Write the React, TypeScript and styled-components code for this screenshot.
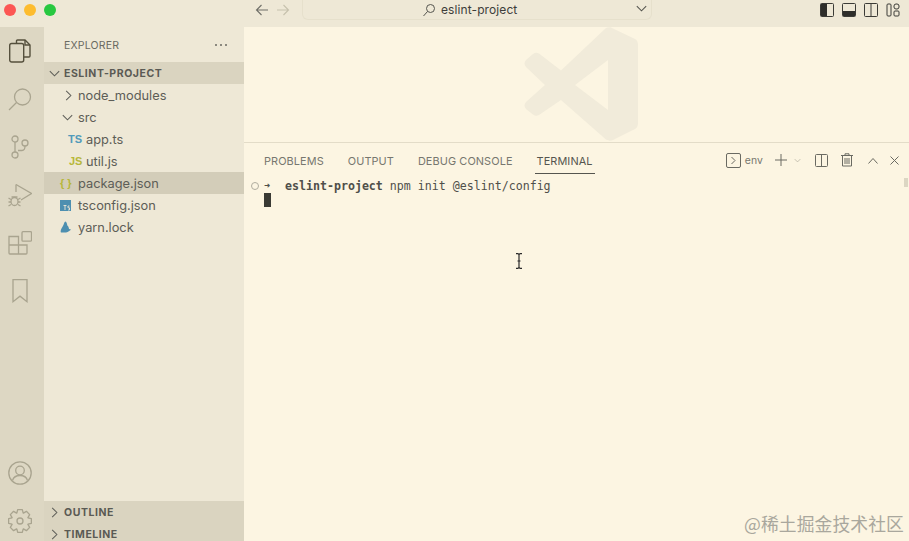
import React from "react";
import styled, { createGlobalStyle } from "styled-components";

const Global = createGlobalStyle`
  html, body {
    margin: 0;
    padding: 0;
    width: 909px;
    height: 541px;
    overflow: hidden;
    background: #fdf6e3;
    font-family: "Inter", "Liberation Sans", sans-serif;
  }
`;

const Window = styled.div`
  position: relative;
  width: 909px;
  height: 541px;
  overflow: hidden;
  display: flex;
  flex-direction: column;
  background: #fcf5e2;
`;

const TitleBar = styled.div`
  height: 27px;
  flex: none;
  display: flex;
  align-items: flex-start;
  background: #eee8d6;
`;

const Lights = styled.div`
  width: 244px;
  flex: none;
  display: flex;
  gap: 8px;
  padding: 4px 0 0 4px;
  box-sizing: border-box;
`;

const Light = styled.span<{ $color: string }>`
  width: 12px;
  height: 12px;
  border-radius: 50%;
  background: ${(p) => p.$color};
`;

const NavArrows = styled.div`
  display: flex;
  gap: 7px;
  padding: 3px 0 0 11px;
  width: 58px;
  box-sizing: border-box;
`;

const SearchBox = styled.div`
  width: 350px;
  height: 20px;
  flex: none;
  box-sizing: border-box;
  border: 1px solid #e6e0cc;
  border-top: none;
  border-radius: 0 0 6px 6px;
  display: flex;
  align-items: center;
  padding-left: 119px;
  color: #3d3d3a;
  font-size: 12px;
  letter-spacing: 0.1px;
  position: relative;
`;

const SearchLabel = styled.span`
  margin-left: 5px;
`;

const SearchChevron = styled.span`
  position: absolute;
  right: 2px;
  top: 1px;
  display: flex;
`;

const LayoutIcons = styled.div`
  margin-left: auto;
  display: flex;
  gap: 8px;
  padding: 3px 9px 0 0;
`;

const Body = styled.div`
  height: 518px;
  flex: none;
  display: flex;
  min-height: 0;
`;

const ActivityBar = styled.div`
  width: 44px;
  flex: none;
  background: #ddd7c3;
  display: flex;
  flex-direction: column;
  align-items: center;
  gap: 24px;
  padding: 12px 4px 12px 0;
  box-sizing: border-box;
  color: #a9a48f;
`;

const ActivityIcon = styled.div`
  height: 24px;
  display: flex;
  align-items: center;
  justify-content: center;
`;

const Spacer = styled.div`
  flex: 1;
`;

const SideBar = styled.div`
  width: 200px;
  flex: none;
  background: #eee8d6;
  display: flex;
  flex-direction: column;
  color: #5f5f59;
`;

const SideHeader = styled.div`
  height: 35px;
  flex: none;
  display: flex;
  align-items: center;
  justify-content: space-between;
  padding: 1px 17px 0 20px;
  box-sizing: border-box;
  font-size: 10.5px;
  letter-spacing: 0.2px;
  color: #6a6a62;
`;

const Dots = styled.span`
  display: flex;
  gap: 3px;
`;

const Dot = styled.i`
  width: 2px;
  height: 2px;
  border-radius: 50%;
  background: #6a6a62;
`;

const SectionRow = styled.div`
  height: 22px;
  flex: none;
  display: flex;
  align-items: center;
  background: #dad4c0;
  font-size: 10.5px;
  font-weight: 700;
  letter-spacing: 0.55px;
  color: #5a5a54;
  padding-left: 3px;
  gap: 2px;
`;

const Tree = styled.div`
  flex: 1;
  display: flex;
  flex-direction: column;
`;

const TreeRow = styled.div<{ $indent: number; $selected?: boolean }>`
  height: 22px;
  flex: none;
  display: flex;
  align-items: center;
  padding-left: ${(p) => p.$indent}px;
  font-size: 12.8px;
  color: #5d5d57;
  background: ${(p) => (p.$selected ? "#d3cdb9" : "transparent")};
`;

const IconSlot = styled.span<{ $width: number }>`
  width: ${(p) => p.$width}px;
  flex: none;
  display: flex;
  align-items: center;
`;

const BadgeText = styled.span<{ $color: string }>`
  font-size: 11px;
  font-weight: 700;
  color: ${(p) => p.$color};
  font-family: "Liberation Sans", sans-serif;
`;

const Main = styled.div`
  flex: 1;
  min-width: 0;
  display: flex;
  flex-direction: column;
`;

const Editor = styled.div`
  height: 115px;
  flex: none;
  overflow: hidden;
  display: flex;
  justify-content: center;
  align-items: flex-start;
`;

const Watermark = styled.svg`
  margin-left: 8px;
`;

const Panel = styled.div`
  flex: 1;
  border-top: 1px solid #e3dcc8;
  display: flex;
  flex-direction: column;
  position: relative;
`;

const PanelTabs = styled.div`
  height: 31px;
  flex: none;
  display: flex;
  padding-left: 20px;
  gap: 24px;
  font-size: 10.9px;
  letter-spacing: 0.1px;
  color: #77776f;
  box-sizing: border-box;
`;

const PanelTab = styled.div<{ $active?: boolean }>`
  height: 31px;
  box-sizing: border-box;
  display: flex;
  align-items: center;
  padding-top: 4px;
  color: ${(p) => (p.$active ? "#55554f" : "#77776f")};
  position: relative;
  ${(p) =>
    p.$active &&
    `
    &::after {
      content: "";
      position: absolute;
      left: -2px;
      right: -2px;
      bottom: 0;
      height: 1px;
      background: #55554f;
    }
  `}
`;

const PanelActions = styled.div`
  margin-left: auto;
  display: flex;
  align-items: center;
  padding: 3px 10px 0 0;
  color: #6a6a62;
`;

const EnvLabel = styled.span`
  margin: 0 11px 0 4px;
  font-size: 10.4px;
  color: #77776f;
`;

const ActionGap = styled.span<{ $width: number }>`
  width: ${(p) => p.$width}px;
  flex: none;
`;

const Terminal = styled.div`
  padding: 5px 0 0 7px;
  font-family: "DejaVu Sans Mono", "Liberation Mono", monospace;
  font-size: 11.62px;
  color: #4f4f4a;
  line-height: 14px;
`;

const TermLine = styled.div`
  display: flex;
  align-items: center;
  height: 14px;
  white-space: pre;
`;

const Ring = styled.span`
  width: 6px;
  height: 6px;
  border-radius: 50%;
  border: 1px solid #b0ad9f;
  margin-right: 5px;
  flex: none;
`;

const Prompt = styled.span`
  width: 21px;
  flex: none;
  font-size: 10px;
  font-weight: 700;
`;

const Bold = styled.b`
  font-weight: 700;
`;

const Block = styled.div`
  width: 7px;
  height: 14px;
  margin: 0 0 0 13px;
  background: #3a3a34;
`;

const ScrollMark = styled.div`
  position: absolute;
  right: 1px;
  top: 35px;
  width: 4px;
  height: 9px;
  background: #dcd6c3;
`;

const IBeam = styled.svg`
  position: absolute;
  left: 515px;
  top: 253px;
`;

const Credit = styled.div`
  position: absolute;
  right: 5px;
  bottom: 5px;
  font-family: "Noto Sans CJK SC", "Liberation Sans", sans-serif;
  font-size: 17.8px;
  color: #a9a79d;
  letter-spacing: 0.1px;
`;

const Chevron = ({ open, color = "#5f5f59", size = 15 }: { open?: boolean; color?: string; size?: number }) => (
  <svg width={size} height={size} viewBox="0 0 16 16" fill="none" stroke={color} strokeWidth="1.1">
    {open ? <path d="M3 5.5 8 10.5 13 5.5" /> : <path d="M5.5 3 10.5 8 5.5 13" />}
  </svg>
);

const LayoutBox = ({ kind }: { kind: "left" | "bottom" | "split" }) => (
  <svg width="14" height="14" viewBox="0 0 14 14" fill="none" stroke="#3b3b36" strokeWidth="1">
    <rect x="0.5" y="0.5" width="13" height="13" rx="1" />
    {kind === "left" && <rect x="1" y="1" width="6" height="12" fill="#2e2e2a" stroke="none" />}
    {kind === "bottom" && <rect x="1" y="8" width="12" height="5" fill="#2e2e2a" stroke="none" />}
    {kind === "split" && <path d="M7 1v12" />}
  </svg>
);

// 8 toothed gear outline for the settings icon
const gearPath = (() => {
  const pts: string[] = [];
  for (let i = 0; i < 8; i++) {
    const a = (i * Math.PI) / 4;
    const steps: [number, number][] = [
      [8.6, -0.38],
      [11.6, -0.2],
      [11.6, 0.2],
      [8.6, 0.38],
    ];
    steps.forEach(([r, d]) => {
      pts.push(`${(12 + r * Math.cos(a + d)).toFixed(2)} ${(12 + r * Math.sin(a + d)).toFixed(2)}`);
    });
  }
  return `M${pts.join("L")}Z`;
})();

export default function App() {
  return (
    <Window>
      <Global />
      <TitleBar>
        <Lights>
          <Light $color="#fc5753" />
          <Light $color="#fdbc2e" />
          <Light $color="#28c840" />
        </Lights>
        <NavArrows>
          <svg width="14" height="14" viewBox="0 0 14 14" fill="none" stroke="#6f6f68" strokeWidth="1.1">
            <path d="M13 7H1.5M6.5 2 1.5 7l5 5" />
          </svg>
          <svg width="14" height="14" viewBox="0 0 14 14" fill="none" stroke="#c6c1ad" strokeWidth="1.1">
            <path d="M1 7h11.5M7.5 2l5 5-5 5" />
          </svg>
        </NavArrows>
        <SearchBox>
          <svg width="14" height="14" viewBox="0 0 14 14" fill="none" stroke="#55554f" strokeWidth="1">
            <circle cx="8.5" cy="5.5" r="4" />
            <path d="M5.5 8.5 1.5 13" />
          </svg>
          <SearchLabel>eslint-project</SearchLabel>
          <SearchChevron>
            <Chevron open color="#55554f" />
          </SearchChevron>
        </SearchBox>
        <LayoutIcons>
          <LayoutBox kind="left" />
          <LayoutBox kind="bottom" />
          <LayoutBox kind="split" />
          <svg width="14" height="14" viewBox="0 0 14 14" fill="none" stroke="#3b3b36" strokeWidth="1">
            <rect x="1" y="1" width="4" height="12" rx="1" />
            <rect x="8" y="1" width="5" height="5" rx="2" />
            <rect x="8" y="8" width="5" height="5" rx="1" />
          </svg>
        </LayoutIcons>
      </TitleBar>
      <Body>
        <ActivityBar>
          <ActivityIcon>
            <svg width="22" height="24" viewBox="0 0 22 24" fill="none" stroke="#55503d" strokeWidth="1.4">
              <path d="M7.500 4V2a1 1 0 0 1 1-1H16l5 5v11a1 1 0 0 1-1 1h-5" />
              <path d="M16 1v5h5" />
              <rect x="0.700" y="4.500" width="14" height="18.500" rx="2" />
            </svg>
          </ActivityIcon>
          <ActivityIcon>
            <svg width="24" height="24" viewBox="0 0 24 24" fill="none" stroke="currentColor" strokeWidth="1.3">
              <circle cx="14.500" cy="10" r="8" />
              <path d="M8.500 15.500 1 23" />
            </svg>
          </ActivityIcon>
          <ActivityIcon>
            <svg width="20" height="24" viewBox="0 0 20 24" fill="none" stroke="currentColor" strokeWidth="1.3">
              <circle cx="5" cy="4" r="3" />
              <circle cx="5" cy="20" r="3" />
              <circle cx="15" cy="8" r="3" />
              <path d="M5 7v10M8 15.500h4c2 0 3-1.500 3-4.500" />
            </svg>
          </ActivityIcon>
          <ActivityIcon>
            <svg width="24" height="24" viewBox="0 0 24 24" fill="none" stroke="currentColor" strokeWidth="1.3">
              <path d="M8 1.500 23.500 10.500 13 17" />
              <path d="M8 1.500V9" />
              <ellipse cx="6.500" cy="18.500" rx="3.500" ry="4" />
              <path d="M.5 15l2.500 1.500M.5 19h2.500M.5 23l2.500-1.500M12.500 15 10 16.500M12.500 19H10M12.500 23 10 21.500M3.500 14h6" />
            </svg>
          </ActivityIcon>
          <ActivityIcon>
            <svg width="24" height="24" viewBox="0 0 24 24" fill="none" stroke="currentColor" strokeWidth="1.3">
              <rect x="14" y="0.700" width="9.500" height="9.500" rx="1" />
              <path d="M1 5.500h9.500v17.500H2a1 1 0 0 1-1-1zM1 14h18v8a1 1 0 0 1-1 1h-7.500M10.500 5.500V14H19" />
            </svg>
          </ActivityIcon>
          <ActivityIcon>
            <svg width="16" height="24" viewBox="0 0 16 24" fill="none" stroke="currentColor" strokeWidth="1.3">
              <path d="M1 .7h14v22l-7-5.500-7 5.500z" />
            </svg>
          </ActivityIcon>
          <Spacer />
          <ActivityIcon>
            <svg width="24" height="24" viewBox="0 0 24 24" fill="none" stroke="currentColor" strokeWidth="1.3">
              <circle cx="12" cy="12" r="11.200" />
              <circle cx="12" cy="9.500" r="4.300" />
              <path d="M4.500 19.500c1-3.500 3.800-5 7.500-5s6.500 1.500 7.500 5" />
            </svg>
          </ActivityIcon>
          <ActivityIcon>
            <svg width="24" height="24" viewBox="0 0 24 24" fill="none" stroke="currentColor" strokeWidth="1.3" strokeLinejoin="round">
              <circle cx="12" cy="12" r="3" />
              <path d={gearPath} />
            </svg>
          </ActivityIcon>
        </ActivityBar>
        <SideBar>
          <SideHeader>
            EXPLORER
            <Dots>
              <Dot />
              <Dot />
              <Dot />
            </Dots>
          </SideHeader>
          <SectionRow>
            <Chevron open />
            ESLINT-PROJECT
          </SectionRow>
          <Tree>
            <TreeRow $indent={17}>
              <IconSlot $width={17}>
                <Chevron />
              </IconSlot>
              node_modules
            </TreeRow>
            <TreeRow $indent={16}>
              <IconSlot $width={18}>
                <Chevron open />
              </IconSlot>
              src
            </TreeRow>
            <TreeRow $indent={24}>
              <IconSlot $width={18}>
                <BadgeText $color="#519aba">TS</BadgeText>
              </IconSlot>
              app.ts
            </TreeRow>
            <TreeRow $indent={25}>
              <IconSlot $width={17}>
                <BadgeText $color="#b7b73b">JS</BadgeText>
              </IconSlot>
              util.js
            </TreeRow>
            <TreeRow $indent={16} $selected>
              <IconSlot $width={18}>
                <BadgeText $color="#b7b73b">{"{ }"}</BadgeText>
              </IconSlot>
              package.json
            </TreeRow>
            <TreeRow $indent={16}>
              <IconSlot $width={18}>
                <svg width="11" height="11" viewBox="0 0 11 11">
                  <rect width="11" height="11" fill="#4d8fb0" />
                  <path d="M3.500 5.500h3M5 5.500V10M9.500 6H8v1.800h1.500V10H8" fill="none" stroke="#eee8d6" strokeWidth="0.9" />
                </svg>
              </IconSlot>
              tsconfig.json
            </TreeRow>
            <TreeRow $indent={16}>
              <IconSlot $width={18}>
                <svg width="11" height="12" viewBox="0 0 11 12">
                  <path d="M5.500 0.500c1 .5 1.500 2 1.800 4 .9.500 1.700 2 1.700 3.500.8 0 1.500.3 2 .8-1.500.9-2.500 2.200-5 2.700H1C.5 11 .5 9 1.500 7.500 2.500 6 3.500 4 4 2.500c.3-1 .8-1.800 1.500-2z" fill="#4d8fb0" />
                </svg>
              </IconSlot>
              yarn.lock
            </TreeRow>
          </Tree>
          <SectionRow>
            <Chevron />
            OUTLINE
          </SectionRow>
          <SectionRow>
            <Chevron />
            TIMELINE
          </SectionRow>
        </SideBar>
        <Main>
          <Editor>
            <Watermark width="116" height="118" viewBox="0 0 116 118" fill="#f1ebda">
              <path d="M83 1c2-1 5-1 7 .5L112 12c2 1 3 3 3 6v78c0 3-1 5-3 6l-22 11c-2 1-5 1-7-.5L38 73 16 88c-2 1-4 1-6-.5L3 82c-2-2-2-5 0-7l19-17L3 40c-2-2-2-5 0-7l7-6c2-1.500 4-1.500 6-.5l22 17zM85 33 52 58l33 25z" fillRule="evenodd" />
            </Watermark>
          </Editor>
          <Panel>
            <PanelTabs>
              <PanelTab>PROBLEMS</PanelTab>
              <PanelTab>OUTPUT</PanelTab>
              <PanelTab>DEBUG CONSOLE</PanelTab>
              <PanelTab $active>TERMINAL</PanelTab>
              <PanelActions>
                <svg width="15" height="15" viewBox="0 0 15 15" fill="none" stroke="currentColor" strokeWidth="1">
                  <rect x="0.500" y="0.500" width="14" height="14" rx="1.500" />
                  <path d="M5.500 4 9 7.500 5.500 11" />
                </svg>
                <EnvLabel>env</EnvLabel>
                <svg width="14" height="14" viewBox="0 0 14 14" fill="none" stroke="currentColor" strokeWidth="1">
                  <path d="M7 1v12M1 7h12" />
                </svg>
                <ActionGap $width={5} />
                <Chevron open size={9} color="#a5a294" />
                <ActionGap $width={13} />
                <svg width="13" height="13" viewBox="0 0 13 13" fill="none" stroke="currentColor" strokeWidth="1">
                  <rect x="0.500" y="0.500" width="12" height="12" rx="1" />
                  <path d="M6.500 1v11" />
                </svg>
                <ActionGap $width={13} />
                <svg width="12" height="14" viewBox="0 0 12 14" fill="none" stroke="currentColor" strokeWidth="1">
                  <path d="M0 2.500h12M4 2.500V.8h4v1.700M1.500 2.500V13h9V2.500M4 5v6M6 5v6M8 5v6" />
                </svg>
                <ActionGap $width={15} />
                <svg width="10" height="7" viewBox="0 0 10 7" fill="none" stroke="currentColor" strokeWidth="1">
                  <path d="M.5 6.500l4.500-5 4.500 5" />
                </svg>
                <ActionGap $width={12} />
                <svg width="9" height="9" viewBox="0 0 9 9" fill="none" stroke="currentColor" strokeWidth="1">
                  <path d="M.5.5l8 8M8.500.5l-8 8" />
                </svg>
              </PanelActions>
            </PanelTabs>
            <Terminal>
              <TermLine>
                <Ring />
                <Prompt>➜</Prompt>
                <Bold>eslint-project</Bold> npm init @eslint/config
              </TermLine>
              <Block />
            </Terminal>
            <ScrollMark />
          </Panel>
        </Main>
      </Body>
      <IBeam width="8" height="16" viewBox="0 0 8 16" fill="none" stroke="#2a2a2a" strokeWidth="1.200">
        <path d="M1 .7h2l1 1 1-1h2M4 1.700v12.600M1 15.300h2l1-1 1 1h2M2.500 8h3" />
      </IBeam>
      <Credit>@稀土掘金技术社区</Credit>
    </Window>
  );
}
